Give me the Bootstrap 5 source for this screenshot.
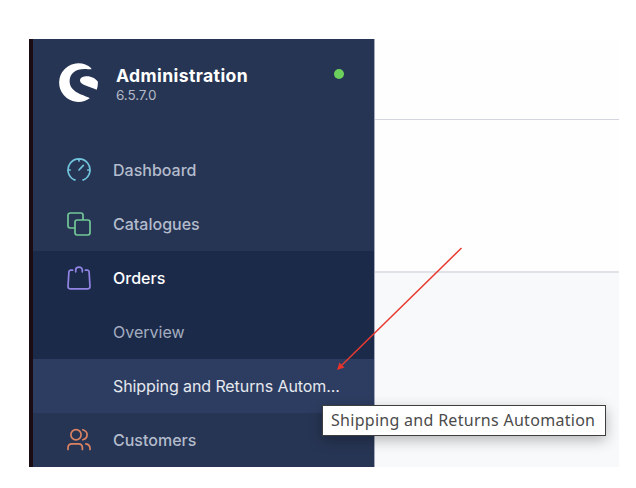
<!DOCTYPE html>
<html lang="en">
<head>
<meta charset="utf-8">
<meta name="viewport" content="width=device-width, initial-scale=1">
<title>Administration</title>
<link href="https://cdn.jsdelivr.net/npm/bootstrap@5.3.0/dist/css/bootstrap.min.css" rel="stylesheet">
<style>
body{background:#fff;width:636px;height:488px;padding:39px 17px 21px 29px}
.app-frame{width:590px;height:428px;background:#f8f9fb;font-family:Inter,"Liberation Sans",sans-serif}
.edge-strip{width:4px;background:#190c13}
.admin-side{width:342px;background:#273554;border-right:1px solid #a3a9bb}
.admin-head{height:104px;padding:24px 30px 0 26px}
.admin-text{margin-left:18px;padding-top:3px}
.admin-title{font-size:17.6px;line-height:20px;font-weight:700;color:#fff;letter-spacing:.38px}
.admin-version{font-size:13.5px;line-height:18px;color:#b3b9c7;letter-spacing:-.1px}
.status-dot{width:10px;height:10px;background:#6cd05c;margin-top:6px}
.side-item{height:54px;padding-left:34px;color:#b3bccc;font-size:16px;font-weight:500;line-height:24px;white-space:nowrap}
.side-item svg{width:24px;height:24px;margin-right:22px;flex:none}
.side-item.open-item{color:#fff}
.side-group{background:#1c2a4a}
.side-sub{height:54px;padding-left:80px;color:#a3adbf;font-size:16px;white-space:nowrap}
.side-sub.current{background:#2d3d61;color:#e6e9ef;letter-spacing:-.09px}
.page-top{height:81px;background:#fefefe;border-bottom:1px solid #d3d6df}
.page-bar{height:153px;background:#fefefe;border-bottom:2px solid #e0e2e8}
.pointer-line{left:327px;top:235px;width:140px;height:140px}
.hint{left:322px;top:405px;width:284px;height:31px;background:#fff;border:1px solid #3e3e3e;box-shadow:0 4px 14px rgba(0,0,0,.28);font-family:"Noto Sans","Open Sans",sans-serif;font-size:16px;line-height:28px;letter-spacing:.29px;color:#4b4b4b;padding-left:8px;white-space:nowrap}
</style>
</head>
<body class="position-relative overflow-hidden">
<div class="app-frame d-flex overflow-hidden">
  <div class="edge-strip flex-shrink-0"></div>
  <aside class="admin-side flex-shrink-0">
    <header class="admin-head d-flex align-items-start">
      <svg width="39" height="39" viewBox="0 0 39 39" fill="#fff" class="flex-shrink-0"><path d="M32.3 5.2A19.3 19.3 0 1 0 30.8 35.2C25.5 31.8 10.6 30 10.6 18C10.6 10.5 16.5 5.9 25.5 5.9C28 5.9 30.5 6.3 32.3 6.2Z"/><path d="M21 17.4C21 14.4 24.5 13.2 28 13.2C32.5 13.2 36.5 15.6 38.8 18.4C39.1 21.3 38.7 24.1 37.7 26.7C32 23.6 21 22.3 21 17.4Z"/></svg>
      <div class="flex-grow-1 admin-text"><div class="admin-title">Administration</div><div class="admin-version">6.5.7.0</div></div>
      <span class="status-dot rounded-circle"></span>
    </header>
    <nav>
      <div class="side-item d-flex align-items-center">
        <svg viewBox="0 0 24 24" fill="none" stroke="#71c3dc" stroke-width="1.7" stroke-linecap="round"><path d="M8 21.8H7.2A11 11 0 1 1 16.8 21.8H16M12 1v2M1.2 12h2M20.8 12h2M12 12l4.3-4.6"/></svg>Dashboard</div>
      <div class="side-item d-flex align-items-center">
        <svg viewBox="0 0 24 24" fill="none" stroke="#72c797" stroke-width="1.7"><path d="M8 16H3.2A2.2 2.2 0 0 1 1 13.8V3.2A2.2 2.2 0 0 1 3.2 1H13.8A2.2 2.2 0 0 1 16 3.2V8"/><rect x="8" y="8" width="15" height="15" rx="2.2"/></svg>Catalogues</div>
      <div class="side-group">
        <div class="side-item open-item d-flex align-items-center">
          <svg viewBox="0 0 24 24" fill="none" stroke="#9184e4" stroke-width="1.7" stroke-linecap="round" stroke-linejoin="round"><path d="M5.6 4.2H3.7Q2 4.2 1.9 5.9L1 20.6Q1 22.8 3 22.8H21Q23 22.8 23 20.6L22.1 5.9Q22 4.2 20.3 4.2H18.4M8.7 5.8V4A3.3 2.9 0 0 1 15.3 4V5.8"/></svg>Orders</div>
        <div class="side-sub d-flex align-items-center">Overview</div>
        <div class="side-sub current d-flex align-items-center">Shipping and Returns Autom...</div>
      </div>
      <div class="side-item d-flex align-items-center">
        <svg viewBox="0 0 24 24" fill="none" stroke="#dc8362" stroke-width="1.7" stroke-linecap="round"><circle cx="9" cy="6.8" r="5.1"/><path d="M1 21.5V19.8Q1 15.8 5 15.8H11.4Q15.4 15.8 15.4 19.8V21.5M15.8 1.8C21.5 3.4 21.5 10.2 15.8 11.8M18.8 15.8Q23 16.4 23 20.2V21.5"/></svg>Customers</div>
    </nav>
  </aside>
  <main class="flex-grow-1"><div class="page-top"></div><div class="page-bar"></div></main>
</div>
<svg class="pointer-line position-absolute" viewBox="327 235 140 140"><path d="M461.5 248L342 365" stroke="#e83a30" stroke-width="1.5" fill="none"/><path d="M337 370L339.5 362.5L344.5 367.5Z" fill="#e8322a"/></svg>
<div class="hint position-absolute" role="tooltip">Shipping and Returns Automation</div>
<script src="https://cdn.jsdelivr.net/npm/bootstrap@5.3.0/dist/js/bootstrap.bundle.min.js"></script>
</body>
</html>
